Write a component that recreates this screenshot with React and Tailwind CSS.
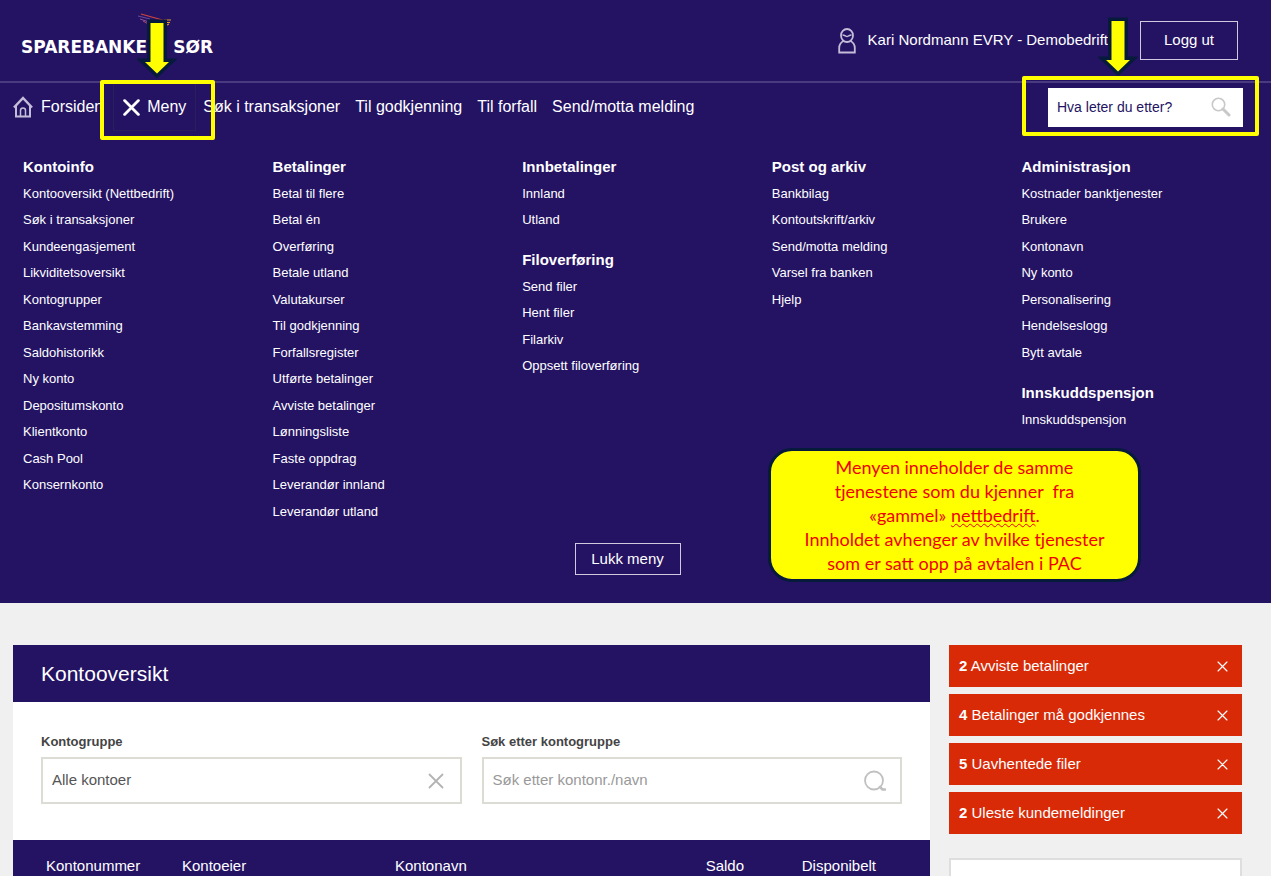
const menuColumns = [
  [
    {
      title: 'Kontoinfo',
      links: [
        'Kontooversikt (Nettbedrift)',
        'Søk i transaksjoner',
        'Kundeengasjement',
        'Likviditetsoversikt',
        'Kontogrupper',
        'Bankavstemming',
        'Saldohistorikk',
        'Ny konto',
        'Depositumskonto',
        'Klientkonto',
        'Cash Pool',
        'Konsernkonto',
      ],
    },
  ],
  [
    {
      title: 'Betalinger',
      links: [
        'Betal til flere',
        'Betal én',
        'Overføring',
        'Betale utland',
        'Valutakurser',
        'Til godkjenning',
        'Forfallsregister',
        'Utførte betalinger',
        'Avviste betalinger',
        'Lønningsliste',
        'Faste oppdrag',
        'Leverandør innland',
        'Leverandør utland',
      ],
    },
  ],
  [
    { title: 'Innbetalinger', links: ['Innland', 'Utland'] },
    { title: 'Filoverføring', links: ['Send filer', 'Hent filer', 'Filarkiv', 'Oppsett filoverføring'] },
  ],
  [
    {
      title: 'Post og arkiv',
      links: ['Bankbilag', 'Kontoutskrift/arkiv', 'Send/motta melding', 'Varsel fra banken', 'Hjelp'],
    },
  ],
  [
    {
      title: 'Administrasjon',
      links: [
        'Kostnader banktjenester',
        'Brukere',
        'Kontonavn',
        'Ny konto',
        'Personalisering',
        'Hendelseslogg',
        'Bytt avtale',
      ],
    },
    { title: 'Innskuddspensjon', links: ['Innskuddspensjon'] },
  ],
]

const alerts = [
  { count: 2, text: 'Avviste betalinger' },
  { count: 4, text: 'Betalinger må godkjennes' },
  { count: 5, text: 'Uavhentede filer' },
  { count: 2, text: 'Uleste kundemeldinger' },
]

function Cross({ className, width = 2 }) {
  return (
    <svg viewBox="0 0 16 16" className={className} fill="none" stroke="currentColor" strokeWidth={width} strokeLinecap="round" aria-hidden="true">
      <path d="M1.5 1.5l13 13M14.5 1.5l-13 13" />
    </svg>
  )
}

function Arrow({ className }) {
  return (
    <svg viewBox="0 0 40 60" className={className} aria-hidden="true">
      <path d="M13.5 4h13v39h5.500L20 54.500 8 43h5.500z" fill="#ffff00" stroke="#061a3c" strokeWidth="7" paintOrder="stroke" />
    </svg>
  )
}

function HomeIcon() {
  return (
    <svg viewBox="0 0 20 22" className="h-[22px] w-5" fill="none" stroke="#c3bdd9" strokeWidth="2" aria-hidden="true">
      <path d="M1 11.500L10 2l9 9.500" strokeWidth="2.500" />
      <path d="M3 10v10.500h14V10" />
      <path d="M7.500 20v-5.500a2.500 2.500 0 0 1 5 0V20" strokeWidth="1.500" />
    </svg>
  )
}

function PersonIcon() {
  return (
    <svg viewBox="0 0 18 26" className="h-[26px] w-[18px]" fill="none" stroke="#c3bdd9" strokeWidth="1.800" aria-hidden="true">
      <ellipse cx="9" cy="7.500" rx="6" ry="6.500" />
      <path d="M4.500 7c2.500 0 3 1.500 4.500 1.500S11 7 13.500 7" strokeWidth="1.400" />
      <path d="M5.500 13C2.500 14.500 1.200 17 1.200 20v4.500h15.600V20c0-3-1.300-5.500-4.300-7" />
    </svg>
  )
}

function Header() {
  return (
    <div className="flex h-[83px] items-center justify-between border-b-2 border-[#4a3b80] pr-[33px] pl-[21px]">
      <a href="#" className="relative flex gap-3 pt-3 font-['DejaVu_Sans'] text-[17px] leading-6 font-bold">
        <span>SPAREBANKEN</span>
        <span>SØR</span>
        <svg viewBox="0 0 34 14" className="absolute -top-2.5 left-[117px] h-3.5 w-[34px]" fill="none" aria-hidden="true">
          <path d="M0 3l12 3" stroke="#6b4a9c" />
          <path d="M2 6l12 4" stroke="#8d4c9a" />
          <path d="M5 8l9 5" stroke="#b34a6c" />
          <path d="M3 1l25 7" stroke="#d2453d" strokeWidth="1.200" />
          <path d="M26 7h7M28 9.500h4M29 12l2-1" stroke="#e6992b" strokeWidth="1.200" />
        </svg>
        <Arrow className="absolute -top-1 left-[116px] h-[60px] w-10" />
      </a>
      <div className="flex items-center text-[15px]">
        <PersonIcon />
        <span className="ml-3">Kari Nordmann EVRY - Demobedrift</span>
        <div className="relative ml-8">
          <button type="button" className="h-[39px] w-[98px] border border-[#cfcadf]">Logg ut</button>
          <Arrow className="absolute -top-1 -left-[42px] h-[60px] w-10" />
        </div>
      </div>
    </div>
  )
}

function NavBar() {
  return (
    <nav className="flex h-12 items-center pr-7 pl-[13px] text-base">
      <a href="#" className="flex items-center gap-2">
        <HomeIcon />
        Forsiden
      </a>
      <div className="relative mr-[7px] ml-2.5">
        <button type="button" className="flex h-12 w-[83px] items-center justify-center gap-[7px] border border-[#2b1e5c]">
          <Cross className="size-[17px]" width={2.6} />
          Meny
        </button>
        <div className="absolute -top-[3px] -right-[19px] -bottom-[9px] -left-[13px] rounded-xs border-4 border-[#ffff00]" />
      </div>
      <div className="flex gap-[15px]">
        <a href="#">Søk i transaksjoner</a>
        <a href="#">Til godkjenning</a>
        <a href="#">Til forfall</a>
        <a href="#">Send/motta melding</a>
      </div>
      <div className="relative ml-auto">
        <label className="flex h-[39px] w-[195px] items-center bg-white pr-3 pl-[9px]">
          <input
            type="text"
            aria-label="Søk"
            placeholder="Hva leter du etter?"
            className="min-w-0 flex-1 text-sm text-[#241363] outline-none placeholder:text-[#241363]"
          />
          <svg viewBox="0 0 20 20" className="size-5" fill="none" stroke="#c8c8c8" aria-hidden="true">
            <circle cx="7.500" cy="7.500" r="6.200" strokeWidth="1.600" />
            <path d="M12 12l6 6" strokeWidth="3" strokeLinecap="round" />
          </svg>
        </label>
        <div className="pointer-events-none absolute -top-3 -right-4 -bottom-[9px] -left-[26px] rounded-xs border-4 border-[#ffff00]" />
      </div>
    </nav>
  )
}

function MegaMenu() {
  return (
    <div className="relative pt-[22px] pb-7">
      <div className="grid grid-cols-5 pl-[23px]">
        {menuColumns.map((groups, i) => (
          <div key={i} className="flex flex-col gap-[13px]">
            {groups.map((group) => (
              <section key={group.title}>
                <h2 className="text-[15px] leading-[27px] font-bold">{group.title}</h2>
                <ul className="text-[13px]">
                  {group.links.map((link) => (
                    <li key={link} className="odd:leading-[27px] even:leading-[26px]">
                      <a href="#">{link}</a>
                    </li>
                  ))}
                </ul>
              </section>
            ))}
          </div>
        ))}
      </div>
      <div className="mt-[18px] flex justify-center pr-4">
        <button type="button" className="h-8 w-[106px] border border-[#cfcadf] text-[15px]">Lukk meny</button>
      </div>
      <div className="absolute right-[130px] bottom-[21px] w-[373px] rounded-3xl border-[3px] border-[#061a3c] bg-[#ffff00] py-1 text-center font-['Lato'] text-lg leading-6 text-[#f00000]">
        <p>
          Menyen inneholder de samme
          <br />
          tjenestene som du kjenner&nbsp; fra
          <br />
          «gammel» <span className="underline decoration-wavy decoration-1">nettbedrift</span>.
        </p>
        <p>
          Innholdet avhenger av hvilke tjenester
          <br />
          som er satt opp på avtalen i PAC
        </p>
      </div>
    </div>
  )
}

function AccountPanel() {
  return (
    <section className="min-w-0 flex-1 bg-white">
      <h1 className="bg-[#241363] px-7 text-[21px] leading-[57px] text-white">Kontooversikt</h1>
      <div className="grid grid-cols-2 gap-5 px-7 pt-[31px] pb-9 text-[#444444]">
        <div>
          <label htmlFor="group" className="block text-[13px] leading-[18px] font-bold">Kontogruppe</label>
          <div className="mt-1.5 flex h-[47px] items-center border-2 border-[#dcdcd5] pr-4 pl-[9px]">
            <input id="group" type="text" defaultValue="Alle kontoer" className="min-w-0 flex-1 text-[15px] text-[#555555] outline-none" />
            <button type="button" aria-label="Fjern" className="text-[#b4b4b4]">
              <Cross className="size-4" width={1.8} />
            </button>
          </div>
        </div>
        <div>
          <label htmlFor="search" className="block text-[13px] leading-[18px] font-bold">Søk etter kontogruppe</label>
          <div className="mt-1.5 flex h-[47px] items-center border-2 border-[#dcdcd5] pr-3.5 pl-[9px]">
            <input
              id="search"
              type="text"
              placeholder="Søk etter kontonr./navn"
              className="min-w-0 flex-1 text-[15px] outline-none placeholder:text-[#999999]"
            />
            <svg viewBox="0 0 22 22" className="size-[22px]" fill="none" stroke="#c0c0c0" aria-hidden="true">
              <circle cx="10" cy="10.500" r="9" strokeWidth="1.800" />
              <path d="M16 17l2.500 2.500H21" strokeWidth="2.600" strokeLinecap="round" />
            </svg>
          </div>
        </div>
      </div>
      <table className="w-full table-fixed bg-[#241363] text-[15px] text-white">
        <thead>
          <tr className="h-[52px] text-left">
            <th className="w-[169px] pl-[33px] font-normal">Kontonummer</th>
            <th className="w-[213px] font-normal">Kontoeier</th>
            <th className="font-normal">Kontonavn</th>
            <th className="w-[132px] text-right font-normal">Saldo</th>
            <th className="w-[186px] pr-[54px] text-right font-normal">Disponibelt</th>
          </tr>
        </thead>
      </table>
    </section>
  )
}

function Alerts() {
  return (
    <aside className="flex w-[293px] flex-col">
      <ul className="flex flex-col gap-[7px]">
        {alerts.map(({ count, text }) => (
          <li key={text} className="flex h-[42px] items-center justify-between bg-[#d92a08] pr-3.5 pl-2.5 text-[15px] text-white">
            <a href="#">
              <b>{count}</b> {text}
            </a>
            <button type="button" aria-label="Lukk">
              <Cross className="size-[11px]" width={1.7} />
            </button>
          </li>
        ))}
      </ul>
      <div className="mt-6 flex-1 border-2 border-[#dedede] bg-white" />
    </aside>
  )
}

export default function App() {
  return (
    <div className="flex h-screen flex-col overflow-hidden bg-[#f0f0f0] font-['Liberation_Sans',sans-serif]">
      <header className="shrink-0 bg-[#241363] text-white">
        <Header />
        <NavBar />
        <MegaMenu />
      </header>
      <main className="flex shrink-0 gap-[19px] pt-[42px] pr-[29px] pl-[13px]">
        <AccountPanel />
        <Alerts />
      </main>
    </div>
  )
}
